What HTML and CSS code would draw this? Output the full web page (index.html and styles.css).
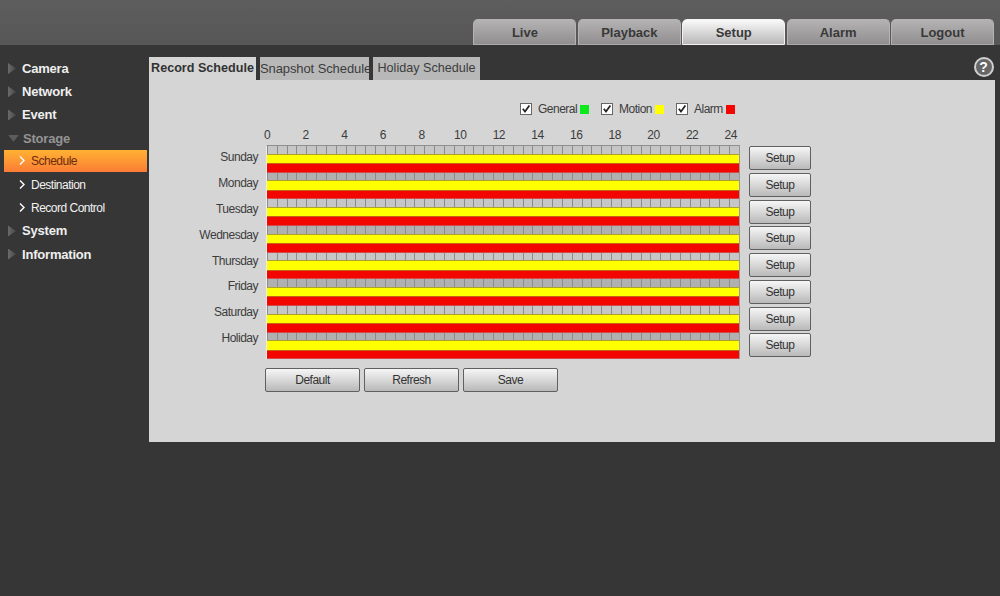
FILE: index.html
```html
<!DOCTYPE html>
<html lang="en">
<head>
    <meta charset="UTF-8">
    <meta name="viewport" content="width=device-width, initial-scale=1.0">
    <title>Record Schedule</title>
    <link rel="stylesheet" href="styles.css">
</head>
<body>
    <header class="header">
        <nav class="main-nav">
            <a class="main-tab">Live</a>
            <a class="main-tab">Playback</a>
            <a class="main-tab active">Setup</a>
            <a class="main-tab">Alarm</a>
            <a class="main-tab">Logout</a>
        </nav>
    </header>

    <div class="page">
        <ul class="sidebar">
            <li class="menu-item">Camera</li>
            <li class="menu-item">Network</li>
            <li class="menu-item">Event</li>
            <li class="menu-item open">Storage</li>
            <li class="sub-item active"><svg class="chevron" viewBox="0 0 6 9"><path d="M1 0.5L5 4.5L1 8.5"/></svg>Schedule</li>
            <li class="sub-item"><svg class="chevron" viewBox="0 0 6 9"><path d="M1 0.5L5 4.5L1 8.5"/></svg>Destination</li>
            <li class="sub-item"><svg class="chevron" viewBox="0 0 6 9"><path d="M1 0.5L5 4.5L1 8.5"/></svg>Record Control</li>
            <li class="menu-item">System</li>
            <li class="menu-item">Information</li>
        </ul>

        <main class="content">
            <div class="tab-bar">
                <a class="tab active">Record Schedule</a>
                <a class="tab snapshot">Snapshot Schedule</a>
                <a class="tab">Holiday Schedule</a>
                <span class="help">?</span>
            </div>

            <div class="panel">
                <div class="legend">
                    <label class="legend-item"><svg class="check" viewBox="0 0 12 12"><rect x="0.5" y="0.5" width="11" height="11"/><path d="M2.8 5.8L5 8.6L9.4 2.6"/></svg><span class="legend-text">General</span><i class="swatch general"></i></label>
                    <label class="legend-item"><svg class="check" viewBox="0 0 12 12"><rect x="0.5" y="0.5" width="11" height="11"/><path d="M2.8 5.8L5 8.6L9.4 2.6"/></svg><span class="legend-text">Motion</span><i class="swatch motion"></i></label>
                    <label class="legend-item"><svg class="check" viewBox="0 0 12 12"><rect x="0.5" y="0.5" width="11" height="11"/><path d="M2.8 5.8L5 8.6L9.4 2.6"/></svg><span class="legend-text">Alarm</span><i class="swatch alarm"></i></label>
                </div>

                <div class="hours">
                    <span>0</span><span>2</span><span>4</span><span>6</span><span>8</span><span>10</span><span>12</span><span>14</span><span>16</span><span>18</span><span>20</span><span>22</span><span>24</span>
                </div>

                <div class="schedule">
                    <div class="days">
                        <span>Sunday</span>
                        <span>Monday</span>
                        <span>Tuesday</span>
                        <span>Wednesday</span>
                        <span>Thursday</span>
                        <span>Friday</span>
                        <span>Saturday</span>
                        <span>Holiday</span>
                    </div>
                    <div class="chart">
                        <div class="row"><div class="ticks"></div><div class="bar motion"></div><div class="bar alarm"></div></div>
                        <div class="row"><div class="ticks"></div><div class="bar motion"></div><div class="bar alarm"></div></div>
                        <div class="row"><div class="ticks"></div><div class="bar motion"></div><div class="bar alarm"></div></div>
                        <div class="row"><div class="ticks"></div><div class="bar motion"></div><div class="bar alarm"></div></div>
                        <div class="row"><div class="ticks"></div><div class="bar motion"></div><div class="bar alarm"></div></div>
                        <div class="row"><div class="ticks"></div><div class="bar motion"></div><div class="bar alarm"></div></div>
                        <div class="row"><div class="ticks"></div><div class="bar motion"></div><div class="bar alarm"></div></div>
                        <div class="row"><div class="ticks"></div><div class="bar motion"></div><div class="bar alarm"></div></div>
                    </div>
                    <div class="setup-buttons">
                        <button type="button">Setup</button>
                        <button type="button">Setup</button>
                        <button type="button">Setup</button>
                        <button type="button">Setup</button>
                        <button type="button">Setup</button>
                        <button type="button">Setup</button>
                        <button type="button">Setup</button>
                        <button type="button">Setup</button>
                    </div>
                </div>

                <div class="actions">
                    <button type="button">Default</button>
                    <button type="button">Refresh</button>
                    <button type="button">Save</button>
                </div>
            </div>
        </main>
    </div>
</body>
</html>
```
FILE: styles.css
```css
* {
    box-sizing: border-box;
}

body {
    margin: 0;
    min-height: 596px;
    background-color: #363636;
    font-family: "Liberation Sans", Arial, sans-serif;
    font-size: 12px;
    letter-spacing: -0.5px;
    color: #3c3c3c;
}

.header {
    height: 45px;
    padding-right: 6px;
    background: linear-gradient(#5d5d5d, #575757);
    display: flex;
    justify-content: flex-end;
    align-items: flex-end;
}

.main-nav {
    display: flex;
    gap: 1.4px;
    letter-spacing: 0;
}

.main-tab {
    width: 103px;
    height: 26px;
    text-align: center;
    font-size: 13px;
    font-weight: bold;
    color: #393939;
    border: 1px solid #b5b3b4;
    border-bottom-color: #aaa;
    border-radius: 5px 5px 0 0;
    line-height: 25px;
    background: linear-gradient(#b4b2b3, #908e8f);
}

.main-tab.active {
    border-color: #f2f2f2;
    background: linear-gradient(#fafafa, #b9b7b8);
}

.page {
    display: flex;
}

/* Left menu */
.sidebar {
    width: 149px;
    margin: 0;
    padding: 12px 2px 0 4px;
    list-style: none;
}

.menu-item,
.sub-item {
    height: 23.2px;
    display: flex;
    align-items: center;
}

.menu-item {
    padding-left: 4px;
    font-size: 13px;
    font-weight: bold;
    letter-spacing: -0.2px;
    color: #efefef;
}

.menu-item::before {
    content: "";
    width: 8px;
    height: 11px;
    margin-right: 6px;
    background: linear-gradient(90deg, #6a6a6a, #484848);
    clip-path: polygon(0 0, 100% 50%, 0 100%);
}

.menu-item.open {
    color: #949494;
}

.menu-item.open::before {
    width: 11px;
    height: 7px;
    margin-right: 4px;
    background: #5c5c5c;
    clip-path: polygon(0 0, 100% 0, 50% 100%);
}

.sub-item {
    padding-left: 15px;
    color: #f2f2f2;
}

.sub-item.active {
    height: 21.2px;
    margin: 0.6px 0 1.4px;
    color: #6b2c0e;
    background: linear-gradient(#ffb233, #fb7c35);
}

.chevron {
    width: 6px;
    height: 9px;
    margin-right: 6px;
    fill: none;
    stroke: #fff;
    stroke-width: 1.4;
}

/* Content */
.content {
    width: 845.5px;
    padding-top: 12px;
}

.tab-bar {
    height: 23px;
    display: flex;
    gap: 4px;
    letter-spacing: 0;
}

.tab {
    width: 107px;
    line-height: 23px;
    text-align: center;
    white-space: nowrap;
    font-size: 12.6px;
    background-color: #b8b8b8;
}

.tab.snapshot {
    width: 109px;
    font-size: 13px;
    letter-spacing: -0.1px;
}

.tab.active {
    font-weight: bold;
    color: #333;
    background-color: #d5d5d5;
}

.help {
    width: 20px;
    height: 20px;
    margin-left: auto;
    margin-right: 1px;
    border: 2px solid #d0d0d0;
    border-radius: 50%;
    line-height: 16px;
    text-align: center;
    font-size: 14px;
    font-weight: bold;
    color: #fff;
    background: #666;
}

.panel {
    height: 361.5px;
    padding-top: 21px;
    background-color: #d5d5d5;
}

.legend {
    height: 16px;
    padding-left: 371px;
    display: flex;
}

.legend-item {
    display: flex;
    align-items: center;
}

.legend-item:first-child {
    width: 81px;
}

.legend-item:nth-child(2) {
    width: 75px;
}

.legend-text {
    min-width: 39px;
}

.legend-item:nth-child(2) .legend-text {
    min-width: 33px;
}

.legend-item:last-child .legend-text {
    min-width: 28px;
}

.check {
    width: 12px;
    height: 12px;
    margin-right: 6px;
    fill: #fff;
    stroke: #666;
}

.check path {
    fill: none;
    stroke: #222;
    stroke-width: 1.7;
}

.swatch {
    width: 9px;
    height: 9px;
    margin-left: 3px;
}

.general {
    background-color: #0be81c;
}

.motion {
    background-color: #ffff00;
}

.alarm {
    background-color: #f30500;
}

.hours {
    height: 28px;
    padding: 11px 0 0 98.7px;
    display: flex;
}

.hours span {
    width: 38.65px;
    text-align: center;
}

.schedule {
    display: flex;
}

.days {
    width: 109px;
    display: flex;
    flex-direction: column;
    text-align: right;
}

.days span {
    height: 25.9px;
    line-height: 24px;
}

.chart {
    width: 474px;
    height: 214px;
    margin-left: 8px;
    border-left: 1px solid #eee;
    border-right: 1px solid #999;
    border-top: 1px solid #8e8e8e;
}

.row {
    height: 26.7px;
}

.ticks {
    height: 7.6px;
    background: repeating-linear-gradient(90deg, #8c8c8c 0, #8c8c8c 1px, transparent 1px, transparent 9.83px) #c6c6c6;
}

.row:nth-child(even) .ticks {
    background-color: #b0b0b0;
}

.bar {
    height: 9.4px;
    border-top: 1px solid #aaa22a;
}

.bar.alarm {
    height: 9.7px;
    border-top-color: #c66118;
    border-bottom: 1px solid #d34a48;
}

button {
    height: 24px;
    padding: 0;
    border: 1px solid #606060;
    border-radius: 2px;
    font-family: inherit;
    font-size: 12px;
    letter-spacing: -0.5px;
    color: #333;
    background: linear-gradient(#f6f6f6, #b9b9b9);
}

.setup-buttons {
    margin: 1px 0 0 9px;
    display: flex;
    flex-direction: column;
    gap: 2.75px;
}

.setup-buttons button {
    width: 62px;
}

.actions {
    padding: 9px 0 0 116px;
    display: flex;
    gap: 4px;
}

.actions button {
    width: 95px;
}
```
